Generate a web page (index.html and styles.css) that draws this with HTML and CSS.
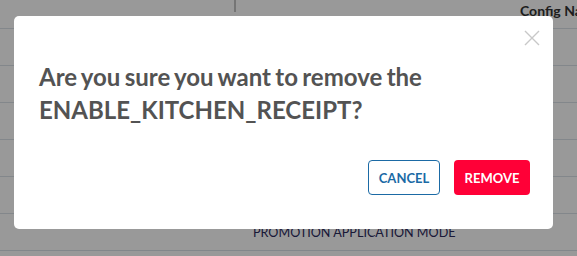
FILE: index.html
```html
<!DOCTYPE html>
<html lang="en">
<head>
    <meta charset="UTF-8">
    <title>Config</title>
    <link rel="stylesheet" href="styles.css">
</head>
<body>
    <div class="page">
        <table class="config-table">
            <tr class="head-row">
                <th class="col-a"><span class="divider"></span></th>
                <th class="col-b">Config Name</th>
            </tr>
            <tr><td class="col-a"></td><td class="col-b"></td></tr>
            <tr><td class="col-a"></td><td class="col-b"></td></tr>
            <tr><td class="col-a"></td><td class="col-b"></td></tr>
            <tr><td class="col-a"></td><td class="col-b"></td></tr>
            <tr><td class="col-a"></td><td class="col-b"></td></tr>
            <tr><td class="col-a"></td><td class="col-b name">PROMOTION APPLICATION MODE</td></tr>
            <tr><td class="col-a"></td><td class="col-b"></td></tr>
        </table>
    </div>

    <div class="backdrop"></div>

    <div class="modal">
        <button class="close" aria-label="Close">
            <svg width="16" height="16" viewBox="0 0 16 16">
                <path d="M1 1 L15 15 M15 1 L1 15" stroke="#c8c8c8" stroke-width="1.4" fill="none"/>
            </svg>
        </button>
        <h2 class="modal-title">Are you sure you want to remove the ENABLE_KITCHEN_RECEIPT?</h2>
        <div class="modal-actions">
            <button class="btn btn-outline">CANCEL</button>
            <button class="btn btn-danger">REMOVE</button>
        </div>
    </div>
</body>
</html>
```

FILE: styles.css
```css
body {
    margin: 0;
    font-family: Lato, "Open Sans", sans-serif;
    background: #fff;
    overflow: hidden;
}
.page {
    width: 577px;
    height: 256px;
    overflow: hidden;
}
.config-table {
    border-collapse: collapse;
    width: 760px;
    margin-top: -8px;
}
.config-table th,
.config-table td {
    border-bottom: 1px solid #dbe1e8;
    padding: 0;
    height: 36px;
}
.head-row th {
    text-align: left;
    vertical-align: middle;
    font-size: 14px;
    font-weight: 700;
    color: #333;
    white-space: nowrap;
}
.col-a {
    width: 236px;
    position: relative;
}
.divider {
    position: absolute;
    right: 0;
    top: 0;
    height: 20px;
    border-right: 2px solid #c4c4c4;
}
.head-row .col-b {
    padding-left: 284px;
}
.col-b.name {
    font-size: 12.6px;
    color: #2b2a5e;
    padding-left: 17px;
    white-space: nowrap;
}
.backdrop {
    position: fixed;
    inset: 0;
    background: rgba(0, 0, 0, 0.4);
}
.modal {
    position: absolute;
    left: 14px;
    top: 16px;
    width: 539px;
    height: 213px;
    box-sizing: border-box;
    background: #fff;
    border-radius: 5px;
    padding: 44px 23px 34px 25px;
    display: flex;
    flex-direction: column;
}
.close {
    position: absolute;
    top: 14px;
    right: 13px;
    background: none;
    border: none;
    padding: 0;
    cursor: pointer;
}
.modal-title {
    margin: 0;
    font-size: 24px;
    font-weight: 700;
    line-height: 33px;
    word-spacing: -1.5px;
    color: #535353;
    max-width: 410px;
}
.modal-actions {
    margin-top: auto;
    display: flex;
    justify-content: flex-end;
    gap: 14px;
}
.btn {
    height: 35px;
    border-radius: 4px;
    font-family: Lato, sans-serif;
    font-size: 13px;
    font-weight: 700;
    cursor: pointer;
}
.btn-outline {
    width: 72px;
    background: #fff;
    border: 1px solid #1b6aa5;
    color: #1b6aa5;
}
.btn-danger {
    width: 76px;
    background: #ff0037;
    border: none;
    color: #fff;
}
```
